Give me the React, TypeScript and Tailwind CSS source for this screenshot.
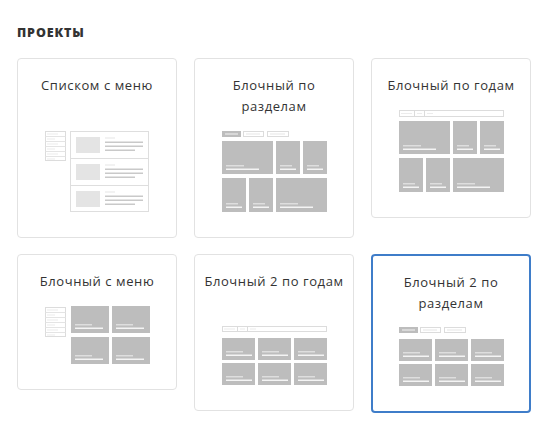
type Block = { x: number; y: number; w: number; h: number };

const GRAY = "#bdbdbd";
const LINE = "#dcdcdc";

// Gray tile with two caption strokes near its bottom-left corner
function Tile({ x, y, w, h }: Block) {
  const wide = w > 45;
  const mid = w > 30;
  const shortW = wide ? 18 : mid ? 17 : 12;
  const longW = wide ? 33 : mid ? (w > 36 ? 28 : 26) : 16;
  return (
    <g>
      <rect x={x} y={y} width={w} height={h} fill={GRAY} />
      <rect x={x + 4} y={y + h - 9} width={shortW} height={1.5} fill="#dedede" />
      <rect x={x + 4} y={y + h - 5.5} width={longW} height={1.5} fill="#f4f4f4" />
    </g>
  );
}

function Tabs() {
  return (
    <g>
      <rect x={0} y={0} width={19} height={6} fill={GRAY} />
      <rect x={3} y={2.5} width={13} height={1} fill="#f4f4f4" />
      <rect x={21.5} y={0.5} width={20} height={5} fill="white" stroke={LINE} />
      <rect x={24} y={2.5} width={14} height={1} fill="#e6e6e6" />
      <rect x={45.5} y={0.5} width={21} height={5} fill="white" stroke={LINE} />
      <rect x={48} y={2.5} width={15} height={1} fill="#e6e6e6" />
    </g>
  );
}

function NavBar({ h }: { h: number }) {
  return (
    <g>
      <rect x={0.5} y={0.5} width={104} height={h - 1} fill="white" stroke={LINE} />
      <line x1={15.5} y1={0.5} x2={15.5} y2={h - 0.5} stroke={LINE} />
      <line x1={25.5} y1={0.5} x2={25.5} y2={h - 0.5} stroke={LINE} />
      <rect x={2} y={h / 2 - 0.5} width={11} height={1} fill="#ececec" />
      <rect x={18} y={h / 2 - 0.5} width={5} height={1} fill="#ececec" />
      <rect x={28} y={h / 2 - 0.5} width={6} height={1} fill="#ececec" />
    </g>
  );
}

function SideMenu({ y = 0 }: { y?: number }) {
  return (
    <g transform={`translate(0 ${y})`}>
      <rect x={0.5} y={0.5} width={20} height={29} fill="white" stroke={LINE} />
      {[5.5, 10.5, 15.5, 20.5, 25.5].map((ly) => (
        <line key={ly} x1={0.5} y1={ly} x2={20.5} y2={ly} stroke="#e4e4e4" />
      ))}
      {[2.5, 7.5, 12.5, 17.5, 22.5, 27.5].map((ly, i) => (
        <rect key={ly} x={2} y={ly} width={i % 2 ? 8 : 11} height={1} fill="#ececec" />
      ))}
    </g>
  );
}

function ListPreview() {
  return (
    <svg width={104} height={81} viewBox="0 0 104 81">
      <SideMenu />
      <rect x={25.5} y={0.5} width={78} height={80} fill="white" stroke="#dedede" />
      <line x1={25.5} y1={27.5} x2={103.5} y2={27.5} stroke="#dedede" />
      <line x1={25.5} y1={54.5} x2={103.5} y2={54.5} stroke="#dedede" />
      {[0, 27, 54].map((oy) => (
        <g key={oy}>
          <rect x={31} y={oy + 6} width={24} height={16} fill="#e4e4e4" />
          <rect x={60} y={oy + 6.5} width={10} height={1} fill="#e6e6e6" />
          <rect x={60} y={oy + 10.5} width={38} height={1.5} fill="#c9c9c9" />
          <rect x={60} y={oy + 14.5} width={38} height={1.5} fill="#c9c9c9" />
          <rect x={60} y={oy + 18.5} width={30} height={1.5} fill="#c9c9c9" />
        </g>
      ))}
    </svg>
  );
}

const MOSAIC: Block[] = [
  { x: 0, y: 0, w: 51, h: 33 },
  { x: 54, y: 0, w: 24, h: 33 },
  { x: 81, y: 0, w: 24, h: 33 },
  { x: 0, y: 37, w: 24, h: 34 },
  { x: 27, y: 37, w: 24, h: 34 },
  { x: 54, y: 37, w: 51, h: 34 },
];

function MosaicPreview({ header }: { header: "tabs" | "nav" }) {
  const top = header === "tabs" ? 10 : 11;
  const height = top + 71;
  return (
    <svg width={105} height={height} viewBox={`0 0 105 ${height}`}>
      {header === "tabs" ? <Tabs /> : <NavBar h={7} />}
      {MOSAIC.map((b, i) => (
        <Tile key={i} {...b} y={b.y + top} />
      ))}
    </svg>
  );
}

function MenuTilesPreview() {
  const tiles: Block[] = [
    { x: 26, y: 0, w: 38, h: 27 },
    { x: 67, y: 0, w: 38, h: 27 },
    { x: 26, y: 31, w: 38, h: 27 },
    { x: 67, y: 31, w: 38, h: 27 },
  ];
  return (
    <svg width={105} height={58} viewBox="0 0 105 58">
      <SideMenu y={1} />
      {tiles.map((b, i) => (
        <Tile key={i} {...b} />
      ))}
    </svg>
  );
}

function GridPreview({ header }: { header: "tabs" | "nav" }) {
  const top = 12;
  const tiles: Block[] = [];
  [0, 25].forEach((ry) =>
    [0, 36, 72].forEach((cx) => tiles.push({ x: cx, y: ry + top, w: 33, h: 22 }))
  );
  return (
    <svg width={105} height={59} viewBox="0 0 105 59">
      {header === "tabs" ? <Tabs /> : <NavBar h={6} />}
      {tiles.map((b, i) => (
        <Tile key={i} {...b} />
      ))}
    </svg>
  );
}

function LayoutCard({
  title,
  selected = false,
  gap = "mt-[14px]",
  children,
}: {
  title: React.ReactNode;
  selected?: boolean;
  gap?: string;
  children: React.ReactNode;
}) {
  return (
    <div
      className={`flex flex-col items-center rounded-[4px] bg-white pb-[25px] pt-4 ${
        selected ? "border-2 border-[#3f7dc9]" : "border border-[#e2e2e2]"
      }`}
    >
      <p className="text-center text-[13px] leading-[21px] tracking-[0.045em] text-[#333]">
        {title}
      </p>
      <div className={gap}>{children}</div>
    </div>
  );
}

export default function App() {
  return (
    <div
      className="min-h-[437px] w-[547px] bg-white px-[17px] pt-[25px]"
      style={{ fontFamily: '"Open Sans", "Liberation Sans", sans-serif' }}
    >
      <h2 className="text-[12.5px] font-extrabold uppercase leading-4 tracking-[0.07em] text-[#333]">
        Проекты
      </h2>
      <div className="mt-[17px] grid grid-cols-[160px_160px_160px] items-start gap-x-[17px] gap-y-4">
        <LayoutCard title="Списком с меню" gap="mt-[35px]">
          <ListPreview />
        </LayoutCard>
        <LayoutCard
          title={
            <>
              Блочный по
              <br />
              разделам
            </>
          }
        >
          <MosaicPreview header="tabs" />
        </LayoutCard>
        <LayoutCard title="Блочный по годам">
          <MosaicPreview header="nav" />
        </LayoutCard>
        <LayoutCard title="Блочный с меню">
          <MenuTilesPreview />
        </LayoutCard>
        <LayoutCard title="Блочный 2 по годам" gap="mt-[34px]">
          <GridPreview header="nav" />
        </LayoutCard>
        <LayoutCard
          selected
          gap="mt-[13px]"
          title={
            <>
              Блочный 2 по
              <br />
              разделам
            </>
          }
        >
          <GridPreview header="tabs" />
        </LayoutCard>
      </div>
    </div>
  );
}
